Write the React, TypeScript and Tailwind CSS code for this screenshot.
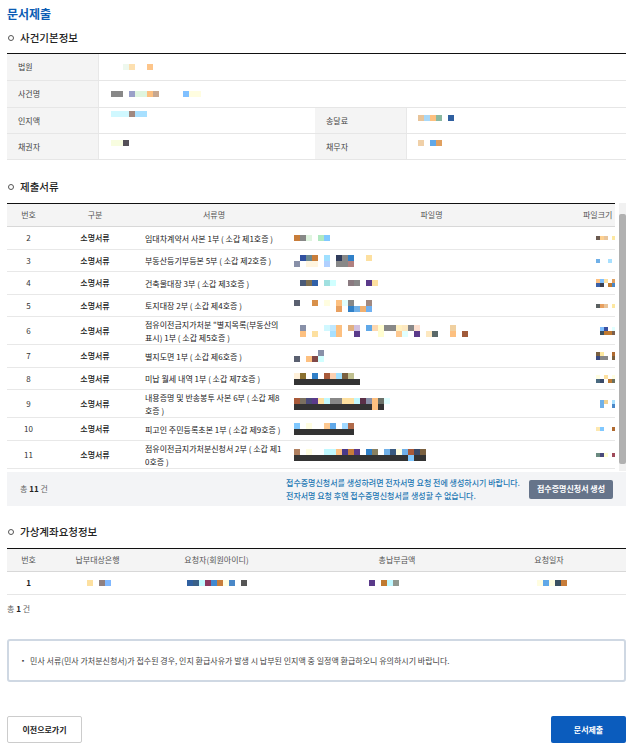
import React from "react";

type Grid = string[][];

function Px({ rows, small }: { rows: Grid; small?: boolean }) {
  const cls = small ? "w-[4px] h-[4px] shrink-0" : "w-[6px] h-[6px] shrink-0";
  return (
    <div className="flex flex-col">
      {rows.map((r, i) => (
        <div key={i} className="flex">
          {r.map((c, j) => (
            <div key={j} className={cls} style={{ backgroundColor: c || "transparent" }} />
          ))}
        </div>
      ))}
    </div>
  );
}

const D = "#333333";
const dark = (n: number, extra: Record<number, string> = {}) =>
  Array.from({ length: n }, (_, i) => extra[i] ?? D);

type Doc = { no: string; h: string; lines: string[]; fn: Grid; fs: Grid };

const docs: Doc[] = [
  {
    no: "2",
    h: "h-[23px]",
    lines: ["임대차계약서 사본 1부 ( 소갑 제1호증 )"],
    fn: [["#c87d3a", "#888888", "#e0f5e0", "", "#b0e8c0", "#80c8ff"]],
    fs: [["#6a5a50", "#fdd090", "#e8c49a", "", "#fde8a0"]],
  },
  {
    no: "3",
    h: "h-[22px]",
    lines: ["부동산등기부등본 5부 ( 소갑 제2호증 )"],
    fn: [
      ["", "#3050a0", "#6a8890", "#c87d3a", "", "#a0e0ff", "", "#303c5c", "#888888", "#3080c8", "", "", "#fde0a0"],
      ["#8890a8", "", "#fff5e0", "#fff5e0", "", "#b0d0ff", "", "#888888", "#888888", "#b08080"],
    ],
    fs: [["#70b0e8", "", "", "#a8e0ff"]],
  },
  {
    no: "4",
    h: "h-[23px]",
    lines: ["건축물대장 3부 ( 소갑 제3호증 )"],
    fn: [["", "#4a5a78", "#807050", "#3060a8", "", "#a0e0e0", "#d0ffff", "", "", "#8a7a80", "#888888", "", "#5a3a8a", "#fde0a0"]],
    fs: [
      ["#fdc080", "#80c0ff", "#fde0a0", "", "#e0a060"],
      ["#3a60a8", "#3a4050", "", "#c07a30", "#4a88c8"],
    ],
  },
  {
    no: "5",
    h: "h-[22px]",
    lines: ["토지대장 2부 ( 소갑 제4호증 )"],
    fn: [
      ["#5a6070", "", "", "#d8904a", "", "#fffde0", "", "#fdc080", "#e0ffff", "#888888", "", "", "#a08880"],
      ["", "", "", "", "", "", "", "#e8a060", "", "#3080c8", "#70b0e8", "#f0b070", "#70b0f0"],
    ],
    fs: [["#5a6060", "#e8a060", "#e8c49a", "", "#fde8a0"]],
  },
  {
    no: "6",
    h: "h-[28px]",
    lines: ['점유이전금지가처분 "별지목록(부동산의', "표시) 1부 ( 소갑 제5호증 )"],
    fn: [
      ["", "#8890a8", "", "", "", "#d0f8ff", "#c0e8ff", "#fdc080", "", "#e0b080", "#d0c0e0", "", "#60a8e8", "#fdd8b0", "#fffdd0", "#888888", "#888888", "#fff0c0", "#fde8c0", "#888888", "#fde0d0", "", "", "", "", "", "#f0d0a0"],
      ["", "#fdc080", "", "#fde0a0", "", "", "#a8e0ff", "#fdc080", "", "", "#5a3a8a", "", "", "", "#fffdd0", "", "", "#fdc890", "#e0ffff", "", "#5a3a8a", "", "#fde8c0", "#5a6868", "", "", "#fdc080", "", "#a05a3a"],
    ],
    fs: [
      ["", "#80c0ff", "#3a50a0", "", "#e0ffff"],
      ["", "#3a5060", "#c07a30", "#c07a30", "#7a6050"],
    ],
  },
  {
    no: "7",
    h: "h-[23px]",
    lines: ["별지도면 1부 ( 소갑 제6호증 )"],
    fn: [
      ["", "", "", "", "#8890a8"],
      ["#5a6070", "", "#fdc080", "#804848", "#d0ffff"],
    ],
    fs: [
      ["#7a6040", "#fde8a0", "", "", "#b06a30"],
      ["#3a4a80", "#888888", "#888888", "", "#7a6040"],
    ],
  },
  {
    no: "8",
    h: "h-[22px]",
    lines: ["미납 월세 내역 1부 ( 소갑 제7호증 )"],
    fn: [
      ["#fff0d8", "#8a7030", "", "#3080c8", "", "#a85a3a", "#fdd0b0", "#a0e0ff", "#7a6040", "#c0c090"],
      dark(11),
    ],
    fs: [
      ["#fffde0", "", "#fde0a0", "", "#fffde0"],
      ["#4a6a80", "#3a4a68", "", "#c07a30", "#6a7060"],
    ],
  },
  {
    no: "9",
    h: "h-[28px]",
    lines: ["내용증명 및 반송봉투 사본 6부 ( 소갑 제8", "호증 )"],
    fn: [
      ["#a85a3a", "#7a7060", "#4a4a7a", "#5a3a8a", "#fde0a0", "#c0f8ff", "#888888", "#888888", "#fde0a0", "#fde0a0", "#c0f8ff", "#5a3048", "#8890a8", "#fdc080", "#6a7068", "#e0ffff"],
      dark(15, { 13: "#fdc080" }),
    ],
    fs: [
      ["", "#70b0e8", "#f0d090", "", "#a8e0ff"],
      ["", "#70b0e8", "", "", "#4a88c8"],
    ],
  },
  {
    no: "10",
    h: "h-[23px]",
    lines: ["피고인 주민등록초본 1부 ( 소갑 제9호증 )"],
    fn: [
      ["#80c8ff", "", "#fffde0", "", "", "#fdc890", "#60a8e8", "", "#a0d8ff", "#b06a4a"],
      dark(10),
    ],
    fs: [["#fde8b0", "#80c8ff", "", "", "#b06a30"]],
  },
  {
    no: "11",
    h: "h-[28px]",
    lines: ["점유이전금지가처분신청서 2부 ( 소갑 제1", "0호증 )"],
    fn: [
      ["#b08060", "", "#fffde0", "", "", "#c0f8ff", "#c0f8ff", "#fdc080", "#4a3a8a", "#c87d3a", "#5a3a8a", "", "#3080c8", "#888060", "", "#70b0e8", "#3a5a80", "#fffde0", "#70b0e8", "#a85a3a", "#3a4a68", "#7a6040"],
      dark(22, { 19: "#80c8ff" }),
    ],
    fs: [["#6a8a80", "#4a4a7a", "#fffdd0", "", "#a04a5a"]],
  },
];

function SectionTitle({ children, className }: { children: React.ReactNode; className: string }) {
  return (
    <div className={`flex items-center gap-[6px] h-[16px] ${className}`}>
      <span className="ml-[1px] w-[6px] h-[6px] rounded-full border-[1.5px] border-[#555]" />
      <span className="text-[10.5px] leading-[16px] text-[#222] font-medium">{children}</span>
    </div>
  );
}

function InfoLabel({ children }: { children: React.ReactNode }) {
  return (
    <div className="w-[92px] shrink-0 bg-[#f4f4f4] pl-[11px] flex items-center text-[8px] text-[#444] border-r border-[#e8e8e8]">
      {children}
    </div>
  );
}

export default function App() {
  return (
    <div className="w-[640px] h-[745px] bg-white overflow-hidden pl-[7px] pr-[14px] pt-[5px] font-['Noto_Sans_CJK_KR','Noto_Sans',sans-serif] text-[#222]">
      <h1 className="text-[12px] leading-[18px] font-bold text-[#0b5cb4]">문서제출</h1>

      <SectionTitle className="mt-[7px]">사건기본정보</SectionTitle>

      <div className="mt-[7px] border-t border-[#111]">
        <div className="flex h-[27px] border-b border-[#e6e6e6]">
          <InfoLabel>법원</InfoLabel>
          <div className="flex-1 pl-[12px] flex items-center">
            <Px rows={[["", "", "#eef8ee", "#fde0b0", "", "", "#fdc58a"]]} />
          </div>
        </div>
        <div className="flex h-[27px] border-b border-[#e6e6e6]">
          <InfoLabel>사건명</InfoLabel>
          <div className="flex-1 pl-[12px] flex items-center">
            <Px rows={[["#888888", "#888888", "", "#9aa0c8", "#dff5df", "#dff5df", "#fdc080", "#c8a890", "", "", "", "", "#80c0ff", "#fffde0", "#fffde0"]]} />
          </div>
        </div>
        <div className="flex h-[26px] border-b border-[#e6e6e6]">
          <InfoLabel>인지액</InfoLabel>
          <div className="w-[216px] shrink-0 pl-[12px] flex items-start pt-[3px]">
            <Px rows={[["#d0f8ff", "#d0f8ff", "#d0f8ff", "#a08880", "#a8e0ff", "#a8e0ff"]]} />
          </div>
          <InfoLabel>송달료</InfoLabel>
          <div className="flex-1 pl-[11px] flex items-start pt-[7px]">
            <Px rows={[["#e8c49a", "#a8d8f8", "#fdc080", "#8ab8a0", "", "#3060a0"]]} />
          </div>
        </div>
        <div className="flex h-[26px] border-b border-[#e6e6e6]">
          <InfoLabel>채권자</InfoLabel>
          <div className="w-[216px] shrink-0 pl-[12px] flex items-start pt-[6px]">
            <Px rows={[["#f8fde0", "#f8fde0", "#555058"]]} />
          </div>
          <InfoLabel>채무자</InfoLabel>
          <div className="flex-1 pl-[11px] flex items-start pt-[6px]">
            <Px rows={[["#f0d0a8", "", "#60a8e8", "#e0a060"]]} />
          </div>
        </div>
      </div>

      <SectionTitle className="mt-[19px]">제출서류</SectionTitle>

      <div className="mt-[8px] flex h-[268px]">
        <div className="w-[608px] overflow-hidden">
          <div className="w-[640px] border-t border-[#111]">
            <div className="flex h-[23px] bg-[#f4f4f4] border-b border-[#d8d8d8] text-[8px] text-[#555] items-center">
              <div className="w-[43px] shrink-0 text-center">번호</div>
              <div className="w-[90px] shrink-0 text-center">구분</div>
              <div className="w-[148px] shrink-0 text-center">서류명</div>
              <div className="w-[287px] shrink-0 text-center">파일명</div>
              <div className="w-[46px] shrink-0 pl-[8px] whitespace-nowrap">파일크기</div>
            </div>
            {docs.map((d) => (
              <div key={d.no} className={`flex ${d.h} border-b border-[#e8e8e8] items-center text-[8px]`}>
                <div className="w-[43px] shrink-0 text-center text-[#333]">{d.no}</div>
                <div className="w-[90px] shrink-0 text-center text-[#222] font-medium">소명서류</div>
                <div className="w-[148px] shrink-0 pl-[5px] overflow-hidden text-[#222]">
                  {d.lines.map((l, i) => (
                    <div key={i} className="whitespace-nowrap leading-[13px] overflow-hidden w-[140px]">
                      {l}
                    </div>
                  ))}
                </div>
                <div className="w-[287px] shrink-0 pl-[6px] flex items-center overflow-hidden">
                  <Px rows={d.fn} />
                </div>
                <div className="w-[46px] shrink-0 pl-[21px] flex items-center">
                  <Px rows={d.fs} small />
                </div>
              </div>
            ))}
          </div>
        </div>
        <div className="ml-[4px] w-[7px] bg-[#f1f1f1] flex flex-col">
          <div className="mt-[11px] h-[250px] bg-[#b1b1b1] rounded-[2px]" />
        </div>
      </div>

      <div className="mt-[1px] h-[34px] bg-[#f3f4f6] flex items-center justify-between pl-[13px] pr-[13px]">
        <div className="text-[8px] text-[#666]">
          총 <span className="font-bold text-[#222]">11</span> 건
        </div>
        <div className="flex items-center gap-[9px]">
          <div className="text-[8px] leading-[13px] text-[#1e78b4] font-medium">
            <div>접수증명신청서를 생성하려면 전자서명 요청 전에 생성하시기 바랍니다.</div>
            <div>전자서명 요청 후엔 접수증명신청서를 생성할 수 없습니다.</div>
          </div>
          <div className="w-[84px] h-[19px] rounded-[2px] bg-[#66748a] text-white text-[8px] font-bold flex items-center justify-center">
            접수증명신청서 생성
          </div>
        </div>
      </div>

      <SectionTitle className="mt-[18px]">가상계좌요청정보</SectionTitle>

      <div className="mt-[8px] border-t border-[#111]">
        <div className="flex h-[23px] bg-[#f4f4f4] border-b border-[#d8d8d8] text-[8px] text-[#555] items-center">
          <div className="w-[43px] text-center">번호</div>
          <div className="w-[95px] text-center">납부대상은행</div>
          <div className="w-[143px] text-center">요청자(회원아이디)</div>
          <div className="w-[218px] text-center">총납부금액</div>
          <div className="w-[86px] text-center">요청일자</div>
        </div>
        <div className="flex h-[23px] border-b border-[#e6e6e6] text-[8px] items-center">
          <div className="w-[43px] text-center font-bold text-[#222]">1</div>
          <div className="w-[95px] pl-[37px] flex">
            <Px rows={[["#fde0a0", "", "#908080", "#80b8ff"]]} />
          </div>
          <div className="w-[143px] pl-[42px] flex">
            <Px rows={[["#3060a0", "#3a6088", "#c0f8ff", "#8a3a60", "#4088d0", "#c87d3a", "#fffde0", "#4a88c8", "", "#555555"]]} />
          </div>
          <div className="w-[218px] pl-[81px] flex">
            <Px rows={[["#5a3a8a", "", "#c07a30", "#c0f8ff", "#909890"]]} />
          </div>
          <div className="w-[86px] pl-[31px] flex">
            <Px rows={[["#fffde0", "#60a8e8", "#fffde0", "#3a5060", "#c87d3a"]]} />
          </div>
        </div>
      </div>

      <div className="mt-[7px] h-[14px] leading-[14px] text-[8px] text-[#666]">
        총 <span className="font-bold text-[#222]">1</span> 건
      </div>

      <div className="mt-[23px] h-[43px] border-2 border-[#cfd8e3] rounded-[3px] flex items-center pl-[11px] text-[8px] text-[#444] whitespace-nowrap">
        <span className="mr-[4px] text-[6px]">▪</span>
        민사 서류(민사 가처분신청서)가 접수된 경우, 인지 환급사유가 발생 시 납부된 인지액 중 일정액 환급하오니 유의하시기 바랍니다.
      </div>

      <div className="mt-[34px] flex justify-between">
        <div className="w-[75px] h-[27px] border border-[#cccccc] rounded-[2px] flex items-center justify-center text-[8px] font-bold text-[#222]">
          이전으로가기
        </div>
        <div className="w-[75px] h-[27px] bg-[#0b5cbd] rounded-[2px] flex items-center justify-center text-[8px] font-bold text-white">
          문서제출
        </div>
      </div>
    </div>
  );
}
